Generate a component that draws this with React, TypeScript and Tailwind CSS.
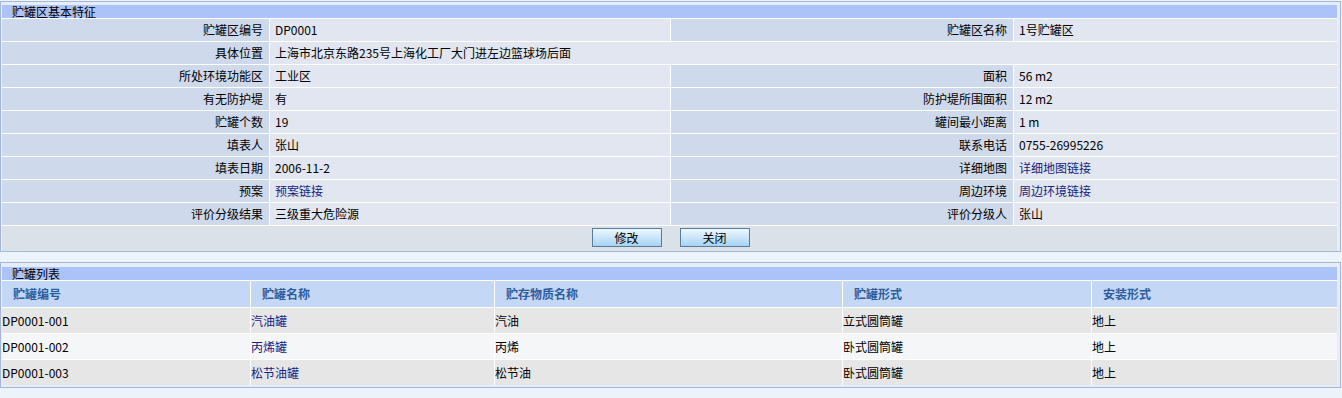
import React from "react";

const font = { fontFamily: '"Noto Sans CJK SC", "Liberation Sans", sans-serif' };

type Cell = { label: string; value: React.ReactNode; link?: boolean };

function Label({ children }: { children: React.ReactNode }) {
  return (
    <div className="bg-[#cfd9ec] h-[22px] flex items-center justify-end pr-[6px] text-[12px] text-black whitespace-nowrap">
      {children}
    </div>
  );
}

function Value({ children, link, span }: { children: React.ReactNode; link?: boolean; span?: boolean }) {
  return (
    <div
      className={`bg-[#e1e6f0] h-[22px] flex items-center pl-[5px] text-[12px] whitespace-nowrap ${
        link ? "text-[#16237f]" : "text-black"
      } ${span ? "col-span-3" : ""}`}
    >
      {children}
    </div>
  );
}

const rows: [Cell, Cell | null][] = [
  [{ label: "贮罐区编号", value: "DP0001" }, { label: "贮罐区名称", value: "1号贮罐区" }],
  [{ label: "具体位置", value: "上海市北京东路235号上海化工厂大门进左边篮球场后面" }, null],
  [{ label: "所处环境功能区", value: "工业区" }, { label: "面积", value: "56 m2" }],
  [{ label: "有无防护堤", value: "有" }, { label: "防护堤所围面积", value: "12 m2" }],
  [{ label: "贮罐个数", value: "19" }, { label: "罐间最小距离", value: "1 m" }],
  [{ label: "填表人", value: "张山" }, { label: "联系电话", value: "0755-26995226" }],
  [{ label: "填表日期", value: "2006-11-2" }, { label: "详细地图", value: "详细地图链接", link: true }],
  [{ label: "预案", value: "预案链接", link: true }, { label: "周边环境", value: "周边环境链接", link: true }],
  [{ label: "评价分级结果", value: "三级重大危险源" }, { label: "评价分级人", value: "张山" }],
];

const tanks = [
  ["DP0001-001", "汽油罐", "汽油", "立式圆筒罐", "地上"],
  ["DP0001-002", "丙烯罐", "丙烯", "卧式圆筒罐", "地上"],
  ["DP0001-003", "松节油罐", "松节油", "卧式圆筒罐", "地上"],
];

function Button({ children }: { children: React.ReactNode }) {
  return (
    <button className="w-[70px] h-[19px] border border-[#557b9e] bg-gradient-to-b from-[#eef8ff] to-[#a6d3f2] text-[12px] text-black flex items-center justify-center leading-none">
      {children}
    </button>
  );
}

export default function App() {
  return (
    <div className="w-[1342px] h-[398px] bg-[#edf3fb] pt-px overflow-hidden" style={font}>
      {/* Panel 1 */}
      <div className="w-[1341px] border border-[#a3b7d6] pl-px pr-[3px] pt-[3px] pb-0 bg-[#e6edf8]">
        <div className="h-[13px] bg-[#abc3f8] flex items-center pl-[10px] text-[12px] text-black leading-none">
          贮罐区基本特征
        </div>
        <div className="grid grid-cols-[267px_400px_342px_323px] gap-px bg-white pt-px pb-px">
          {rows.map(([a, b], i) => (
            <React.Fragment key={i}>
              <Label>{a.label}</Label>
              <Value link={a.link} span={!b}>
                {a.value}
              </Value>
              {b && (
                <>
                  <Label>{b.label}</Label>
                  <Value link={b.link}>{b.value}</Value>
                </>
              )}
            </React.Fragment>
          ))}
        </div>
        <div className="h-[25px] bg-[#dbe1e9] flex items-start justify-center gap-[18px] pt-[2px] pl-[2px]">
          <Button>修改</Button>
          <Button>关闭</Button>
        </div>
      </div>

      {/* Panel 2 */}
      <div className="w-[1341px] mt-[10px] border border-[#a3b7d6] pl-px pr-[3px] pt-[4px] pb-[2px] bg-[#e6edf8]">
        <div className="h-[13px] bg-[#abc3f8] flex items-center pl-[10px] text-[12px] text-black leading-none">
          贮罐列表
        </div>
        <div className="grid grid-cols-[248px_243px_347px_248px_245px] gap-px bg-white pt-px">
          {["贮罐编号", "贮罐名称", "贮存物质名称", "贮罐形式", "安装形式"].map((h) => (
            <div
              key={h}
              className="h-[26px] bg-[#c4d7f4] flex items-center pl-[11px] text-[12px] font-bold text-[#2b5d9f]"
            >
              {h}
            </div>
          ))}
          {tanks.map((r, i) =>
            r.map((c, j) => (
              <div
                key={`${i}-${j}`}
                className={`h-[25px] flex items-center text-[12px] whitespace-nowrap ${
                  i % 2 === 0 ? "bg-[#e6e6e7]" : "bg-[#f5f6f8]"
                } ${j === 1 ? "text-[#16237f]" : "text-black"}`}
              >
                {c}
              </div>
            ))
          )}
        </div>
      </div>
    </div>
  );
}
